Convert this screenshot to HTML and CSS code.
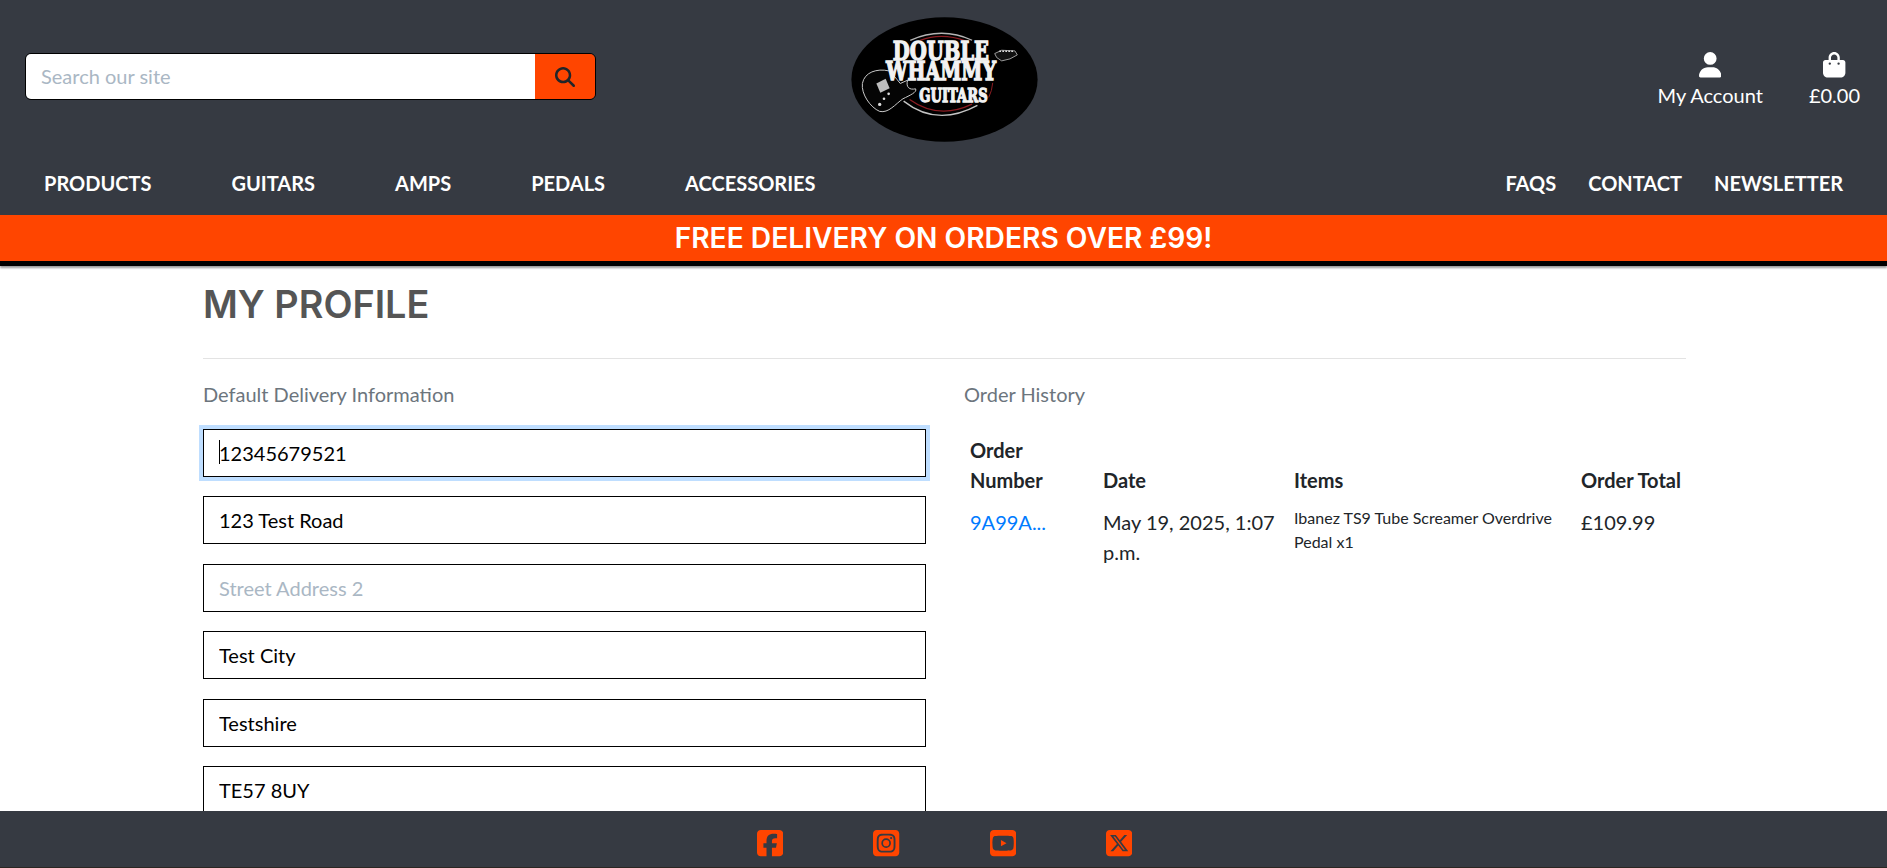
FILE: index.html
```html
<!DOCTYPE html>
<html lang="en">
<head>
  <meta charset="UTF-8">
  <meta name="viewport" content="width=device-width, initial-scale=1.0">
  <title>My Profile - Double Whammy Guitars</title>
  <link rel="stylesheet" href="styles.css">
</head>
<body>
  <header class="site-header">
    <div class="header-top">
      <form class="search-form">
        <input class="search-input" type="text" placeholder="Search our site">
        <button class="search-button" type="button" aria-label="Search">
          <svg class="search-icon" viewBox="0 0 512 512"><path d="M416 208c0 45.900-14.900 88.300-40 122.700L502.600 457.400c12.500 12.500 12.500 32.800 0 45.300s-32.800 12.500-45.300 0L330.700 376c-34.400 25.200-76.800 40-122.700 40C93.100 416 0 322.900 0 208S93.100 0 208 0S416 93.100 416 208zM208 352a144 144 0 1 0 0-288 144 144 0 1 0 0 288z"/></svg>
        </button>
      </form>

      <a class="logo" href="#" aria-label="Double Whammy Guitars">
        <svg class="logo-svg" viewBox="93 50 560 376">
          <ellipse cx="373" cy="238" rx="280" ry="187" fill="#000"/>
          <path d="M270 120 Q365 78 456 120" fill="none" stroke="#b5b5b5" stroke-width="4"/>
          <path d="M300 120 Q365 96 436 122" fill="none" stroke="#8c1c22" stroke-width="4"/>
          <path d="M250 303 Q350 382 472 316" fill="none" stroke="#c4c4c4" stroke-width="4"/>
          <path d="M268 298 Q355 360 456 312" fill="none" stroke="#8c1c22" stroke-width="4"/>
          <path d="M518 248 Q516 272 506 292" fill="none" stroke="#8c1c22" stroke-width="3"/>
          <!-- guitar -->
          <path d="M205 212 C170 204 132 216 126 250 C122 282 150 322 178 334 C205 340 225 312 248 296 C268 286 292 276 286 266 C268 270 256 262 262 240 L240 250 C226 232 216 222 205 212 Z" fill="#050505" stroke="#c9c9c9" stroke-width="3"/>
          <path d="M168 250 L196 236 L208 264 L180 278 Z" fill="#bdbdbd"/>
          <circle cx="178" cy="313" r="5" fill="#ddd"/>
          <circle cx="191" cy="296" r="4" fill="#ddd"/>
          <circle cx="205" cy="281" r="4" fill="#ddd"/>
          <path d="M524 160 L545 150 L585 152 L592 164 L570 176 L545 182 L530 172 Z" fill="#111" stroke="#b9b9b9" stroke-width="2.500"/>
          <path d="M538 153 H582" stroke="#ddd" stroke-width="5" stroke-dasharray="5 4"/>
          <text class="logo-text" x="217" y="180" font-size="78" textLength="290" lengthAdjust="spacingAndGlyphs">DOUBLE</text>
          <text class="logo-text" x="197" y="239" font-size="78" textLength="331" lengthAdjust="spacingAndGlyphs">WHAMMY</text>
          <text class="logo-text" x="297" y="305" font-size="58" textLength="206" lengthAdjust="spacingAndGlyphs">GUITARS</text>
        </svg>
      </a>

      <div class="account-links">
        <a class="account-link" href="#">
          <svg class="account-icon" viewBox="0 0 448 512"><path d="M224 256A128 128 0 1 0 224 0a128 128 0 1 0 0 256zm-45.700 48C79.800 304 0 383.800 0 482.300C0 498.700 13.300 512 29.700 512H418.300c16.400 0 29.700-13.300 29.700-29.700C448 383.800 368.200 304 269.700 304H178.300z"/></svg>
          <span>My Account</span>
        </a>
        <a class="account-link" href="#">
          <svg class="account-icon" viewBox="0 0 448 512"><path d="M160 112c0-35.300 28.700-64 64-64s64 28.700 64 64v48H160V112zm-48 48H48c-26.500 0-48 21.500-48 48V416c0 53 43 96 96 96H352c53 0 96-43 96-96V208c0-26.500-21.500-48-48-48H336V112C336 50.100 285.900 0 224 0S112 50.100 112 112v48zm24 48a24 24 0 1 1 0 48 24 24 0 1 1 0-48zm152 24a24 24 0 1 1 48 0 24 24 0 1 1 -48 0z"/></svg>
          <span>£0.00</span>
        </a>
      </div>
    </div>

    <nav class="main-nav">
      <ul class="nav-list nav-left">
        <li><a href="#">PRODUCTS</a></li>
        <li><a href="#">GUITARS</a></li>
        <li><a href="#">AMPS</a></li>
        <li><a href="#">PEDALS</a></li>
        <li><a href="#">ACCESSORIES</a></li>
      </ul>
      <ul class="nav-list nav-right">
        <li><a href="#">FAQS</a></li>
        <li><a href="#">CONTACT</a></li>
        <li><a href="#">NEWSLETTER</a></li>
      </ul>
    </nav>

    <div class="delivery-banner">FREE DELIVERY ON ORDERS OVER £99!</div>
  </header>

  <main class="page-content">
    <h1 class="page-title">MY PROFILE</h1>
    <hr class="title-rule">

    <div class="profile-columns">
      <section class="profile-form">
        <p class="section-label">Default Delivery Information</p>
        <form class="form-fields">
          <div class="field field-focused">
            <input class="text-field" type="text" value="12345679521">
            <span class="caret"></span>
          </div>
          <div class="field"><input class="text-field" type="text" value="123 Test Road"></div>
          <div class="field"><input class="text-field" type="text" placeholder="Street Address 2"></div>
          <div class="field"><input class="text-field" type="text" value="Test City"></div>
          <div class="field"><input class="text-field" type="text" value="Testshire"></div>
          <div class="field"><input class="text-field" type="text" value="TE57 8UY"></div>
        </form>
      </section>

      <section class="order-history">
        <p class="section-label">Order History</p>
        <table class="order-table">
          <thead>
            <tr>
              <th class="col-number">Order Number</th>
              <th class="col-date">Date</th>
              <th class="col-items">Items</th>
              <th class="col-total">Order Total</th>
            </tr>
          </thead>
          <tbody>
            <tr>
              <td><a href="#">9A99A...</a></td>
              <td>May 19, 2025, 1:07 p.m.</td>
              <td class="item-cell">Ibanez TS9 Tube Screamer Overdrive Pedal x1</td>
              <td>£109.99</td>
            </tr>
          </tbody>
        </table>
      </section>
    </div>
  </main>

  <footer class="site-footer">
    <a class="social-link" href="#" aria-label="Facebook">
      <svg viewBox="0 32 448 448"><path d="M64 32C28.700 32 0 60.700 0 96V416c0 35.300 28.700 64 64 64h98.200V334.200H109.400V256h52.800V222.300c0-87.100 39.400-127.500 125-127.500c16.200 0 44.200 3.200 55.700 6.400V172c-6-.6-16.500-1-29.600-1c-42 0-58.200 15.900-58.200 57.200V256h83.600l-14.400 78.200H255V480H384c35.300 0 64-28.700 64-64V96c0-35.300-28.700-64-64-64H64z"/></svg>
    </a>
    <a class="social-link" href="#" aria-label="Instagram">
      <svg viewBox="0 32 448 448"><path fill-rule="evenodd" d="M64 32H384c35.300 0 64 28.700 64 64V416c0 35.300-28.700 64-64 64H64c-35.300 0-64-28.700-64-64V96C0 60.700 28.700 32 64 32zM158 97c-25.500 1.200-48.300 7.100-67 25.800S66.500 164.400 65.200 190c-1.500 26.400-1.500 105.600 0 132c1.200 25.600 7.100 48.300 25.800 67s41.400 24.600 67 25.900c26.400 1.500 105.600 1.500 132 0c25.600-1.300 48.300-7.200 67-25.900s24.500-41.400 25.800-67c1.500-26.500 1.500-105.600 0-131.900c-1.200-25.600-7.100-48.300-25.800-67S315.600 98.300 290 97C263.600 95.500 184.400 95.500 158 97zM224 124c30 0 60 0 83 4c25 5 38 18 41 41c4 23 4 57 4 87s0 64-4 87c-3 23-16 36-41 41c-23 4-53 4-83 4s-60 0-83-4c-25-5-38-18-41-41c-4-23-4-57-4-87s0-64 4-87c3-23 16-36 41-41c23-4 53-4 83-4zM224 174a82 82 0 1 0 0 164 82 82 0 1 0 0-164zM224 203a53 53 0 1 1 0 106 53 53 0 1 1 0-106zM310 150a19 19 0 1 0 0 38 19 19 0 1 0 0-38z"/></svg>
    </a>
    <a class="social-link" href="#" aria-label="YouTube">
      <svg viewBox="0 32 448 448"><path d="M282 256.200l-95.200-54.100V310.300L282 256.200zM384 32H64C28.700 32 0 60.700 0 96V416c0 35.300 28.700 64 64 64H384c35.300 0 64-28.700 64-64V96c0-35.300-28.700-64-64-64zm14.400 136.100c7.600 28.600 7.600 88.200 7.600 88.200s0 59.600-7.600 88.100c-4.200 15.800-16.500 27.700-32.200 31.900C337.900 384 224 384 224 384s-113.900 0-142.200-7.600c-15.700-4.200-28-16.100-32.200-31.900C42 315.900 42 256.300 42 256.300s0-59.700 7.600-88.200c4.200-15.800 16.500-28.200 32.200-32.400C110.100 128 224 128 224 128s113.900 0 142.200 7.700c15.700 4.200 28 16.600 32.200 32.400z"/></svg>
    </a>
    <a class="social-link" href="#" aria-label="X">
      <svg viewBox="0 32 448 448"><path d="M64 32C28.700 32 0 60.700 0 96V416c0 35.300 28.700 64 64 64H384c35.300 0 64-28.700 64-64V96c0-35.300-28.700-64-64-64H64zm297.100 84L257.300 234.600 379.400 396H283.800L209 298.100 123.300 396H75.800l111-126.900L69.700 116h98l67.700 89.500L313.600 116h47.500zM323.300 367.600L153.400 142.900H125.100L296.900 367.600h26.400z"/></svg>
    </a>
  </footer>
</body>
</html>
```

FILE: styles.css
```css
* {
  box-sizing: border-box;
}

html,
body {
  height: 100%;
}

body {
  margin: 0;
  display: flex;
  flex-direction: column;
  overflow: hidden;
  font-family: Lato, sans-serif;
  font-size: 20px;
  color: #212529;
  background-color: #fff;
}

a {
  text-decoration: none;
}

/* Header */
.site-header {
  flex-shrink: 0;
  background-color: #363a42;
}

.header-top {
  display: grid;
  grid-template-columns: 1fr auto 1fr;
  align-items: start;
  height: 158px;
  padding: 0 24px 0 25px;
}

.search-form {
  display: flex;
  width: 571px;
  height: 47px;
  margin-top: 53px;
  border: 1px solid #000;
  border-radius: 6px;
  overflow: hidden;
}

.search-input {
  flex: 1;
  min-width: 0;
  padding: 0 15px 2px;
  border: none;
  outline: none;
  font-family: inherit;
  font-size: 20px;
}

.search-input::placeholder,
.text-field::placeholder {
  color: #aab7c4;
  opacity: 1;
}

.search-button {
  display: flex;
  align-items: center;
  justify-content: center;
  width: 60px;
  padding: 0;
  border: none;
  background-color: #ff4500;
}

.search-icon {
  width: 20px;
  height: 20px;
  fill: #212529;
}

.logo {
  display: block;
  height: 125px;
  margin-top: 17px;
}

.logo-svg {
  display: block;
  width: 187px;
  height: 125px;
}

.logo-text {
  font-family: "DejaVu Serif", serif;
  font-weight: 700;
  fill: #f2f2f2;
  stroke: #f2f2f2;
  stroke-width: 4px;
}

.account-links {
  display: flex;
  justify-content: flex-end;
  gap: 46px;
  margin: 52px 3px 0 0;
}

.account-link {
  display: flex;
  flex-direction: column;
  align-items: center;
  gap: 3px;
  color: #fff;
  line-height: 28px;
}

.account-icon {
  width: 22.4px;
  height: 25.6px;
  fill: #fff;
}

/* Nav */
.main-nav {
  display: flex;
  justify-content: space-between;
  align-items: center;
  height: 57px;
  padding: 0 44px 8px;
}

.nav-list {
  display: flex;
  margin: 0;
  padding: 0;
  list-style: none;
}

.nav-left {
  gap: 80px;
}

.nav-right {
  gap: 32px;
}

.nav-list a {
  color: #fff;
  font-weight: 700;
  font-size: 20px;
}

.delivery-banner {
  height: 51px;
  padding-top: 1px;
  border-bottom: 5px solid #000;
  background-color: #ff4500;
  box-shadow: 0 2px 2px rgba(0, 0, 0, 0.4);
  color: #fff;
  font-family: Inter, sans-serif;
  font-weight: 600;
  font-size: 28.2px;
  line-height: 44px;
  text-align: center;
}

/* Page */
.page-content {
  flex: 1;
  min-height: 0;
  overflow: hidden;
  padding: 0 201px 0 203px;
}

.page-title {
  margin: 16px 0 0;
  color: #555;
  font-family: Inter, sans-serif;
  font-weight: 600;
  font-size: 37.8px;
  line-height: 44px;
}

.title-rule {
  margin: 32px 0 0;
  border: none;
  border-top: 1px solid #e3e3e3;
}

.profile-columns {
  display: grid;
  grid-template-columns: 723px 722px;
  gap: 38px;
}

.section-label {
  margin: 21px 0 0;
  color: #6c757d;
  font-size: 20px;
  line-height: 28px;
}

.form-fields {
  display: flex;
  flex-direction: column;
  gap: 19.5px;
  margin-top: 20.6px;
}

.field {
  position: relative;
}

.text-field {
  display: block;
  width: 100%;
  height: 48px;
  padding: 0 15px;
  border: 1px solid #000;
  border-radius: 0;
  outline: none;
  color: #000;
  font-family: inherit;
  font-size: 20px;
}

.field-focused .text-field {
  box-shadow: 0 0 0 4px #bfdeff;
}

.caret {
  position: absolute;
  top: 11px;
  left: 16px;
  width: 1px;
  height: 24px;
  background-color: #000;
}

/* Order table */
.order-table {
  width: 100%;
  margin-top: 21px;
  border-collapse: collapse;
  table-layout: fixed;
}

.order-table th,
.order-table td {
  padding: 6px;
  text-align: left;
  vertical-align: bottom;
  font-size: 20px;
  line-height: 30px;
}

.order-table th {
  font-weight: 700;
}

.order-table td {
  vertical-align: top;
}

.order-table td a {
  color: #007bff;
}

.order-table .item-cell {
  padding-top: 5px;
  font-size: 16px;
  line-height: 24px;
}

.col-number {
  width: 133px;
}

.col-date {
  width: 191px;
}

.col-items {
  width: 287px;
}

.col-total {
  white-space: nowrap;
}

/* Footer */
.site-footer {
  display: flex;
  justify-content: center;
  align-items: center;
  flex-shrink: 0;
  gap: 90px;
  height: 57px;
  padding: 9px 0 0 2px;
  background-color: #363a42;
  border-bottom: 1px solid #2b2622;
}

.social-link svg {
  display: block;
  width: 26.25px;
  height: 26.25px;
  fill: #ff4500;
}
```
